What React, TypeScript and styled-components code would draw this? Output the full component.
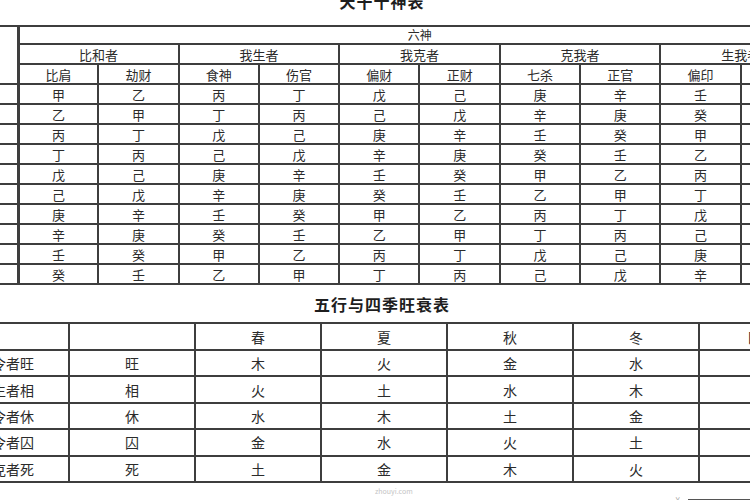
import React from 'react'
import styled, { createGlobalStyle } from 'styled-components'

const GlobalStyle = createGlobalStyle`
  html, body {
    margin: 0;
    padding: 0;
    background: #fff;
    overflow: hidden;
  }
  body {
    font-family: "Noto Sans CJK SC", "Noto Sans", sans-serif;
    color: #2b2b2b;
  }
`

const Page = styled.div`
  width: 750px;
  height: 500px;
  overflow: hidden;
  display: flex;
  flex-direction: column;
`

const Title = styled.h1<{ $mt: number; $mb: number }>`
  margin: ${(p) => p.$mt}px 0 ${(p) => p.$mb}px;
  padding-left: 14px;
  font-size: 16px;
  line-height: 18px;
  font-weight: 700;
  letter-spacing: 1px;
  text-align: center;
  color: #1e1e1e;
  flex: none;
`

const Grid = styled.table<{ $shift: number; $w: number }>`
  border-collapse: collapse;
  table-layout: fixed;
  width: ${(p) => p.$w}px;
  margin-left: ${(p) => p.$shift}px;
  flex: none;
`

const Cell = styled.td<{ $h: number; $size?: number; $thick?: boolean }>`
  border: 2px solid #3e3e3e;
  border-left-width: ${(p) => (p.$thick ? 3 : 2)}px;
  height: ${(p) => p.$h}px;
  padding: 0;
  text-align: center;
  vertical-align: middle;
  font-size: ${(p) => p.$size ?? 13}px;
  line-height: 1;
  white-space: nowrap;
  overflow: hidden;
`

const Footer = styled.div`
  display: flex;
  align-items: flex-start;
  justify-content: space-between;
  padding-left: 375px;
  height: 20px;
  flex: none;
`

const Watermark = styled.span`
  font-size: 7px;
  color: #c4c4c4;
  margin-top: 3px;
`

const Corner = styled.div`
  display: flex;
  align-items: flex-start;
  gap: 8px;
  margin-top: 13px;
`

const Mark = styled.span`
  font-size: 8px;
  line-height: 8px;
  color: #9a9a9a;
`

const Bar = styled.div`
  width: 62px;
  height: 6px;
  margin-top: 3px;
  background: #555;
`

const groups = ['比和者', '我生者', '我克者', '克我者', '生我者']
const gods = ['比肩', '劫财', '食神', '伤官', '偏财', '正财', '七杀', '正官', '偏印', '正印']
const stems = ['甲', '乙', '丙', '丁', '戊', '己', '庚', '辛', '壬', '癸']

// 同阴阳的位置偏移 + 异阴阳互换
const godStem = (row: number, col: number) => {
  const group = Math.floor(col / 2)
  const base = row + group * 2
  const flip = col % 2 === 1
  const idx = flip ? (base % 2 === 0 ? base + 1 : base - 1) : base
  return stems[((idx % 10) + 10) % 10]
}

const seasons = ['', '春', '夏', '秋', '冬', '四季']
const states = [
  { label: '当令者旺', name: '旺', cells: ['木', '火', '金', '水', '土'] },
  { label: '令生者相', name: '相', cells: ['火', '土', '水', '木', '金'] },
  { label: '生令者休', name: '休', cells: ['水', '木', '土', '金', '火'] },
  { label: '克令者囚', name: '囚', cells: ['金', '水', '火', '土', '木'] },
  { label: '令克者死', name: '死', cells: ['土', '金', '木', '火', '水'] },
]

const App = () => {
  return (
    <>
      <GlobalStyle />
      <Page>
        <Title $mt={-8} $mb={15}>天干十神表</Title>

        <Grid $shift={-3} $w={823}>
          <colgroup>
            <col style={{ width: 20 }} />
            {gods.map((g) => (
              <col key={g} style={{ width: 80.3 }} />
            ))}
          </colgroup>
          <tbody>
            <tr>
              <Cell $h={16} rowSpan={3} />
              <Cell $h={16} $size={12} $thick colSpan={10}>六神</Cell>
            </tr>
            <tr>
              {groups.map((g) => (
                <Cell key={g} $h={18} colSpan={2} $thick={g === '比和者'}>
                  {g}
                </Cell>
              ))}
            </tr>
            <tr>
              {gods.map((g, i) => (
                <Cell key={g} $h={18} $thick={i === 0}>
                  {g}
                </Cell>
              ))}
            </tr>
            {stems.map((s, r) => (
              <tr key={s}>
                <Cell $h={18} />
                {gods.map((g, c) => (
                  <Cell key={g} $h={18} $thick={c === 0}>
                    {godStem(r, c)}
                  </Cell>
                ))}
              </tr>
            ))}
          </tbody>
        </Grid>

        <Title $mt={10} $mb={9}>五行与四季旺衰表</Title>

        <Grid $shift={-58} $w={884}>
          <colgroup>
            {[0, 1, 2, 3, 4, 5, 6].map((i) => (
              <col key={i} style={{ width: 126 }} />
            ))}
          </colgroup>
          <tbody>
            <tr>
              <Cell $h={25} $size={14} />
              {seasons.map((s, i) => (
                <Cell key={i} $h={25} $size={14}>
                  {s}
                </Cell>
              ))}
            </tr>
            {states.map((st) => (
              <tr key={st.name}>
                <Cell $h={24.4} $size={14}>{st.label}</Cell>
                <Cell $h={24.4} $size={14}>{st.name}</Cell>
                {st.cells.map((c, i) => (
                  <Cell key={i} $h={24.4} $size={14}>
                    {c}
                  </Cell>
                ))}
              </tr>
            ))}
          </tbody>
        </Grid>

        <Footer>
          <Watermark>zhouyi.com</Watermark>
          <Corner>
            <Mark>¥</Mark>
            <Bar />
          </Corner>
        </Footer>
      </Page>
    </>
  )
}

export default App
